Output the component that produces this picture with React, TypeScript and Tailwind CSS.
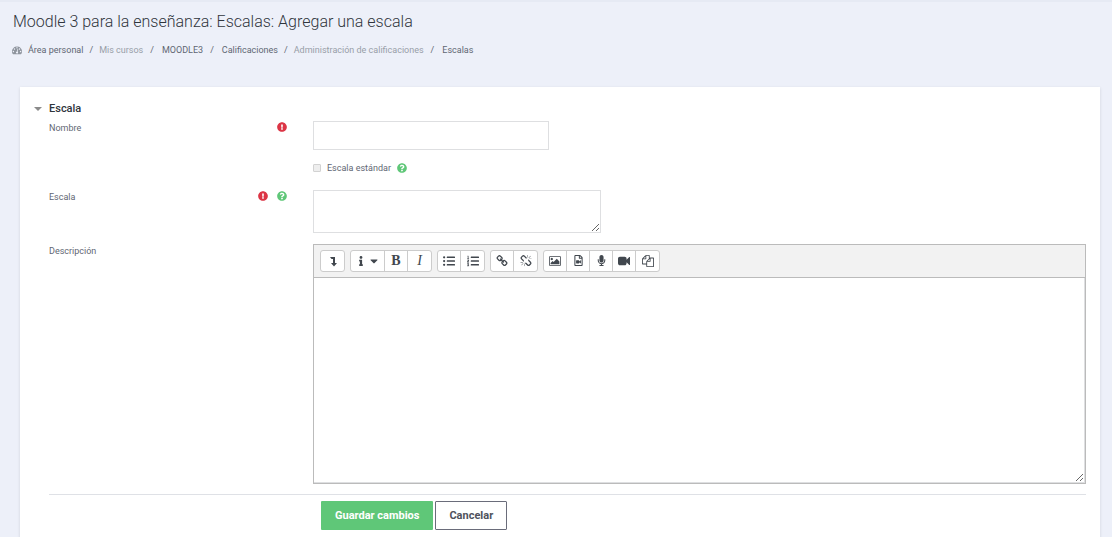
import type { ReactNode } from "react";
import {
  FaCaretDown,
  FaExclamationCircle,
  FaInfo,
  FaListOl,
  FaListUl,
  FaMicrophone,
  FaQuestionCircle,
  FaRegFileVideo,
} from "react-icons/fa";

function Glyph({ d, box = "0 0 1792 1792" }: { d: string; box?: string }) {
  return (
    <svg viewBox={box} className="h-3 w-3" fill="currentColor" aria-hidden="true">
      <path d={d} />
    </svg>
  );
}

const LINK =
  "M1520 1216q0-40-28-68l-208-208q-28-28-68-28-42 0-72 32 3 3 19 18.500t21.500 21.500 15 19 13 25.500 3.500 27.500q0 40-28 68t-68 28q-15 0-27.500-3.500t-25.500-13-19-15-21.500-21.500-18.500-19q-33 31-33 73 0 40 28 68l206 207q27 27 68 27 40 0 68-26l147-146q28-28 28-67zm-703-705q0-40-28-68l-206-207q-28-28-68-28-39 0-68 27l-147 146q-28 28-28 67 0 40 28 68l208 208q27 27 68 27 42 0 72-31-3-3-19-18.500t-21.500-21.500-15-19-13-25.500-3.500-27.500q0-40 28-68t68-28q15 0 27.500 3.500t25.500 13 19 15 21.500 21.500 18.500 19q33-31 33-73zm895 705q0 120-85 203l-147 146q-83 83-203 83-121 0-204-85l-206-207q-83-83-83-203 0-123 88-209l-88-88q-86 88-208 88-120 0-204-84l-208-208q-84-84-84-204t85-203l147-146q83-83 203-83 121 0 204 85l206 207q83 83 83 203 0 123-88 209l88 88q86-88 208-88 120 0 204 84l208 208q84 84 84 204z";
const UNLINK =
  "M503 1271l-256 256q-10 9-23 9-12 0-23-9-9-10-9-23t9-23l256-256q10-9 23-9t23 9q9 10 9 23t-9 23zm169 41v320q0 14-9 23t-23 9-23-9-9-23v-320q0-14 9-23t23-9 23 9 9 23zm-224-224q0 14-9 23t-23 9h-320q-14 0-23-9t-9-23 9-23 23-9h320q14 0 23 9t9 23zm1264 128q0 120-85 203l-147 146q-83 83-203 83-121 0-204-85l-334-335q-21-21-42-56l239-18 273 274q28 28 68 27.500t68-27.500l147-146q28-28 28-67 0-40-28-68l-274-275 18-239q35 21 56 42l336 336q84 86 84 204zm-617-724l-239 18-273-274q-28-28-68-28-39 0-68 27l-147 146q-28 28-28 67 0 40 28 68l274 274-18 240q-35-21-56-42l-336-336q-84-86-84-204 0-120 85-203l147-146q83-83 203-83 121 0 204 85l334 335q21 21 42 56zm633 84q0 14-9 23t-23 9h-320q-14 0-23-9t-9-23 9-23 23-9h320q14 0 23 9t9 23zm-544-544v320q0 14-9 23t-23 9-23-9-9-23v-320q0-14 9-23t23-9 23 9 9 23zm407 151l-256 256q-11 9-23 9t-23-9q-9-10-9-23t9-23l256-256q10-9 23-9t23 9q9 10 9 23t-9 23z";
const PICTURE =
  "M640 576q0 80-56 136t-136 56-136-56-56-136 56-136 136-56 136 56 56 136zm1024 384v448h-1408v-192l320-320 160 160 512-512zm96-704h-1600q-13 0-22.500 9.500t-9.500 22.500v1216q0 13 9.500 22.500t22.500 9.500h1600q13 0 22.500-9.500t9.500-22.500v-1216q0-13-9.500-22.500t-22.500-9.500zm160 32v1216q0 66-47 113t-113 47h-1600q-66 0-113-47t-47-113v-1216q0-66 47-113t113-47h1600q66 0 113 47t47 113z";
const FILES =
  "M1696 384q40 0 68 28t28 68v1216q0 40-28 68t-68 28h-960q-40 0-68-28t-28-68v-288h-544q-40 0-68-28t-28-68v-672q0-40 20-88t48-76l408-408q28-28 76-48t88-20h416q40 0 68 28t28 68v328q68-40 128-40h416zm-544 213l-299 299h299v-299zm-640-384l-299 299h299v-299zm196 647l316-316v-416h-384v416q0 40-28 68t-68 28h-416v640h512v-256q0-40 20-88t48-76zm956 804v-1152h-384v416q0 40-28 68t-68 28h-416v640h896z";
const CAMERA =
  "M1792 352v1088q0 42-39 59-13 5-25 5-27 0-45-19l-403-403v166q0 119-84.500 203.500t-203.500 84.500h-704q-119 0-203.500-84.500t-84.500-203.500v-704q0-119 84.500-203.500t203.500-84.500h704q119 0 203.500 84.500t84.500 203.500v165l403-402q18-19 45-19 12 0 25 5 39 17 39 59z";
const GAUGE =
  "M384 1152q0-53-37.500-90.500t-90.500-37.500-90.500 37.500-37.500 90.500 37.500 90.500 90.500 37.500 90.500-37.500 37.500-90.500zm192-448q0-53-37.500-90.500t-90.500-37.500-90.500 37.500-37.500 90.500 37.500 90.500 90.500 37.500 90.500-37.500 37.500-90.500zm428 481l101-382q6-26-7.500-48.500t-38.500-29.500-48 6.500-30 39.500l-101 382q-60 5-107 43.500t-63 98.500q-20 77 20 146t117 89 146-20 89-117q16-60-6-117t-72-91zm660-33q0-53-37.500-90.500t-90.500-37.500-90.500 37.500-37.500 90.500 37.500 90.500 90.500 37.500 90.500-37.500 37.500-90.500zm-640-640q0-53-37.500-90.500t-90.500-37.500-90.500 37.500-37.500 90.500 37.500 90.500 90.500 37.500 90.500-37.500 37.500-90.500zm448 192q0-53-37.500-90.500t-90.500-37.500-90.500 37.500-37.500 90.500 37.500 90.500 90.500 37.500 90.500-37.500 37.500-90.500zm320 448q0 261-141 483-19 29-54 29h-1402q-35 0-54-29-141-221-141-483 0-182 71-348t191-286 286-191 348-71 348 71 286 191 191 286 71 348z";

type Tool = { label: string; icon: ReactNode; wide?: boolean };

const toolGroups: Tool[][] = [
  [{ label: "Mostrar más botones", icon: <Glyph box="0 0 12 12" d="M3 2h5v6h2L7 11.500 4 8h2V4H4.500z" /> }],
  [
    {
      label: "Estilos de párrafo",
      wide: true,
      icon: (
        <>
          <FaInfo className="h-[10px] w-[10px]" />
          <FaCaretDown className="h-3 w-3" />
        </>
      ),
    },
    { label: "Negrita", icon: <span className="text-sm leading-4 font-bold">B</span> },
    { label: "Cursiva", icon: <span className="text-sm leading-4 italic">I</span> },
  ],
  [
    { label: "Lista sin numerar", icon: <FaListUl className="h-3 w-3" /> },
    { label: "Lista numerada", icon: <FaListOl className="h-3 w-3" /> },
  ],
  [
    { label: "Enlace", icon: <Glyph d={LINK} /> },
    { label: "Desenlazar", icon: <Glyph d={UNLINK} /> },
  ],
  [
    { label: "Imagen", icon: <Glyph box="0 0 1920 1792" d={PICTURE} /> },
    { label: "Multimedia", icon: <FaRegFileVideo className="h-[11px] w-[11px]" /> },
    { label: "Grabar audio", icon: <FaMicrophone className="h-[11px] w-[11px]" /> },
    { label: "Grabar vídeo", icon: <Glyph d={CAMERA} /> },
    { label: "Gestionar archivos", icon: <Glyph d={FILES} /> },
  ],
];

const crumbs = [
  { text: "Área personal", link: true },
  { text: "Mis cursos", link: false },
  { text: "MOODLE3", link: true },
  { text: "Calificaciones", link: true },
  { text: "Administración de calificaciones", link: false },
  { text: "Escalas", link: true },
];

function Required() {
  return <FaExclamationCircle className="h-[10px] w-[10px] text-[#dc3545]" role="img" aria-label="Obligatorio" />;
}

function Help() {
  return (
    <button type="button" aria-label="Ayuda" className="text-[#5fc778]">
      <FaQuestionCircle className="h-[10px] w-[10px]" />
    </button>
  );
}

function Row({ id, label, marks, children }: { id: string; label: string; marks?: ReactNode; children: ReactNode }) {
  return (
    <div className="flex items-start">
      <div className="flex w-[264px] shrink-0 items-start justify-between pr-[26px]">
        <label htmlFor={id} className="pt-px leading-3">
          {label}
        </label>
        <span className="flex items-center gap-[9px] pt-px">{marks}</span>
      </div>
      <div className="min-w-0 flex-1">{children}</div>
    </div>
  );
}

export default function App() {
  return (
    <div className="min-h-screen border-t-2 border-[#e6eaf4] bg-[#edf0f9] font-[Roboto,sans-serif] text-[9px] text-[#5f6773]">
      <header className="px-3 pt-2">
        <h1 className="pl-px text-base leading-6 font-light text-[#30353c]">
          Moodle 3 para la enseñanza: Escalas: Agregar una escala
        </h1>
        <nav aria-label="Ruta" className="mt-[10px]">
          <ol className="flex flex-wrap items-center leading-3">
            {crumbs.map((crumb, i) => (
              <li key={crumb.text} className="flex items-center">
                {i === 0 ? (
                  <svg viewBox="0 0 1792 1792" className="mr-[6px] h-[10px] w-[10px] text-[#8f959e]" fill="currentColor" aria-hidden="true">
                    <path d={GAUGE} />
                  </svg>
                ) : (
                  <span className={crumb.link ? "mr-2 ml-[7px]" : "mx-[6px]"}>/</span>
                )}
                {crumb.link ? <a href="#">{crumb.text}</a> : <span className="text-[#989ea8]">{crumb.text}</span>}
              </li>
            ))}
          </ol>
        </nav>
      </header>

      <main className="mt-[31px] mr-3 ml-5 bg-white pt-[14px] pr-[14px] pb-5 pl-[14px] shadow-[0_1px_3px_rgba(0,0,0,0.12)]">
        <form onSubmit={(e) => e.preventDefault()}>
          <h2>
            <button type="button" aria-expanded="true" className="flex items-center text-[11px] leading-4 font-medium text-[#30353c]">
              <svg viewBox="0 0 8 4" className="mr-[7px] h-1 w-2" aria-hidden="true">
                <path d="M0 0h8L4 4z" fill="#8b8b8b" />
              </svg>
              Escala
            </button>
          </h2>

          <div className="pl-[15px]">
            <div className="pt-1">
              <Row id="nombre" label="Nombre" marks={<Required />}>
                <input id="nombre" type="text" className="block h-[29px] w-[236px] max-w-full border border-[#dedfe1] bg-white px-2 text-[11px] outline-none" />
              </Row>
            </div>

            <div className="mt-3 flex items-center gap-[6px] pl-[264px] leading-3">
              <input
                id="estandar"
                type="checkbox"
                disabled
                className="h-2 w-2 appearance-none rounded-[1px] border border-[#d2d2d2] bg-[#eeeeee]"
              />
              <label htmlFor="estandar">Escala estándar</label>
              <Help />
            </div>

            <div className="mt-4">
              <Row
                id="escala"
                label="Escala"
                marks={
                  <>
                    <Required />
                    <Help />
                  </>
                }
              >
                <textarea id="escala" className="block h-[43px] w-[288px] max-w-full resize border border-[#dedfe1] bg-white px-2 text-[11px] outline-none" />
              </Row>
            </div>

            <div className="mt-[11px]">
              <Row id="descripcion" label="Descripción">
                <div className="border border-[#bbbbbb]">
                  <div role="toolbar" aria-label="Editor" className="flex flex-wrap gap-[5px] border-b border-[#bbbbbb] bg-[#f2f2f2] px-[6px] py-[5px]">
                    {toolGroups.map((group) => (
                      <div key={group[0].label} className="flex h-[22px] divide-x divide-[#cccccc] rounded-[3px] border border-[#cccccc] bg-white">
                        {group.map((tool) => (
                          <button
                            key={tool.label}
                            type="button"
                            aria-label={tool.label}
                            title={tool.label}
                            className={`flex items-center justify-center pb-px font-["Liberation_Serif",serif] text-[#41474e] ${tool.wide ? "w-[34px] gap-[2px]" : "w-[23px]"}`}
                          >
                            {tool.icon}
                          </button>
                        ))}
                      </div>
                    ))}
                  </div>
                  <textarea id="descripcion" className="block h-[205px] w-full resize border-r border-b border-[#dedfe1] bg-white p-2 text-[11px] outline-none" />
                </div>
              </Row>
            </div>

            <div className="mt-[10px] flex gap-[2px] border-t border-[#dfe1e6] pt-[6px] pl-[272px] text-[11px] font-bold">
              <button type="submit" className="h-[29px] rounded-[1px] bg-[#5fc778] px-[14px] pt-px text-white">
                Guardar cambios
              </button>
              <button type="button" className="h-[29px] rounded-[1px] border border-[#6a6c7a] bg-white px-[13px] pt-px text-[#50525c]">
                Cancelar
              </button>
            </div>
          </div>
        </form>
      </main>
    </div>
  );
}
